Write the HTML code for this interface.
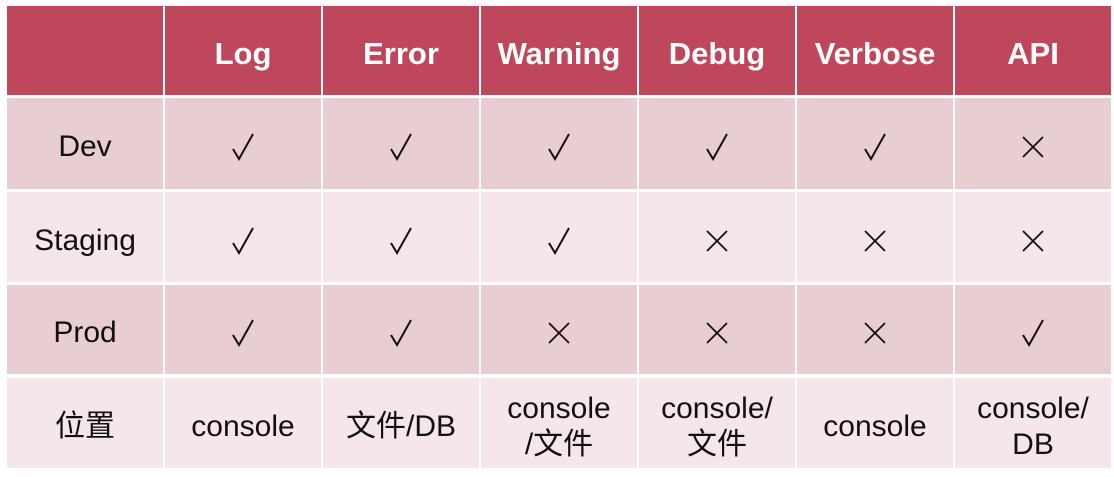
<!DOCTYPE html>
<html><head><meta charset="utf-8"><style>
body{margin:0;width:1114px;height:477px;background:#fff;position:relative;overflow:hidden;font-family:"Liberation Sans","Noto Sans CJK SC",sans-serif}
.c{position:absolute;display:flex;align-items:center;justify-content:center;text-align:center;color:#111;font-size:30px;line-height:36px;box-sizing:border-box;padding-top:7px}
.h{background:#be475b;color:#fff;font-weight:bold;font-size:31px;padding-top:6px}
.d{background:#e8cdd2}
.l{background:#f5e6e9}
svg{display:block}
</style></head><body>
<div id="t"></div>
<script>
var xs=[7,165,323,481,639,797,955],ws=[156,156,156,156,156,156,156];
var ys=[6,98,192,285,378],hs=[89,91,90,89,90];
var CK='<svg width="24" height="30" viewBox="0 0 24 30"><path d="M2 17 L8 27 L22 2" fill="none" stroke="#111" stroke-width="2"/></svg>';
var XX='<svg width="24" height="24" viewBox="0 0 24 24"><path d="M2 2 L22 22 M22 2 L2 22" fill="none" stroke="#111" stroke-width="1.8"/></svg>';
var rows=[
["h","","Log","Error","Warning","Debug","Verbose","API"],
["d","Dev","✓","✓","✓","✓","✓","✕"],
["l","Staging","✓","✓","✓","✕","✕","✕"],
["d","Prod","✓","✓","✕","✕","✕","✓"],
["l","位置","console","文件/DB","console<br>/文件","console/<br>文件","console","console/<br>DB"]];
var h="";
rows.forEach(function(r,i){for(var j=0;j<7;j++){var v=r[j+1];if(v=="✓")v=CK;else if(v=="✕")v=XX;
h+='<div class="c '+r[0]+'" style="left:'+xs[j]+'px;top:'+ys[i]+'px;width:'+ws[j]+'px;height:'+hs[i]+'px">'+v+'</div>';}});
document.getElementById("t").outerHTML=h;
</script>
</body></html>
